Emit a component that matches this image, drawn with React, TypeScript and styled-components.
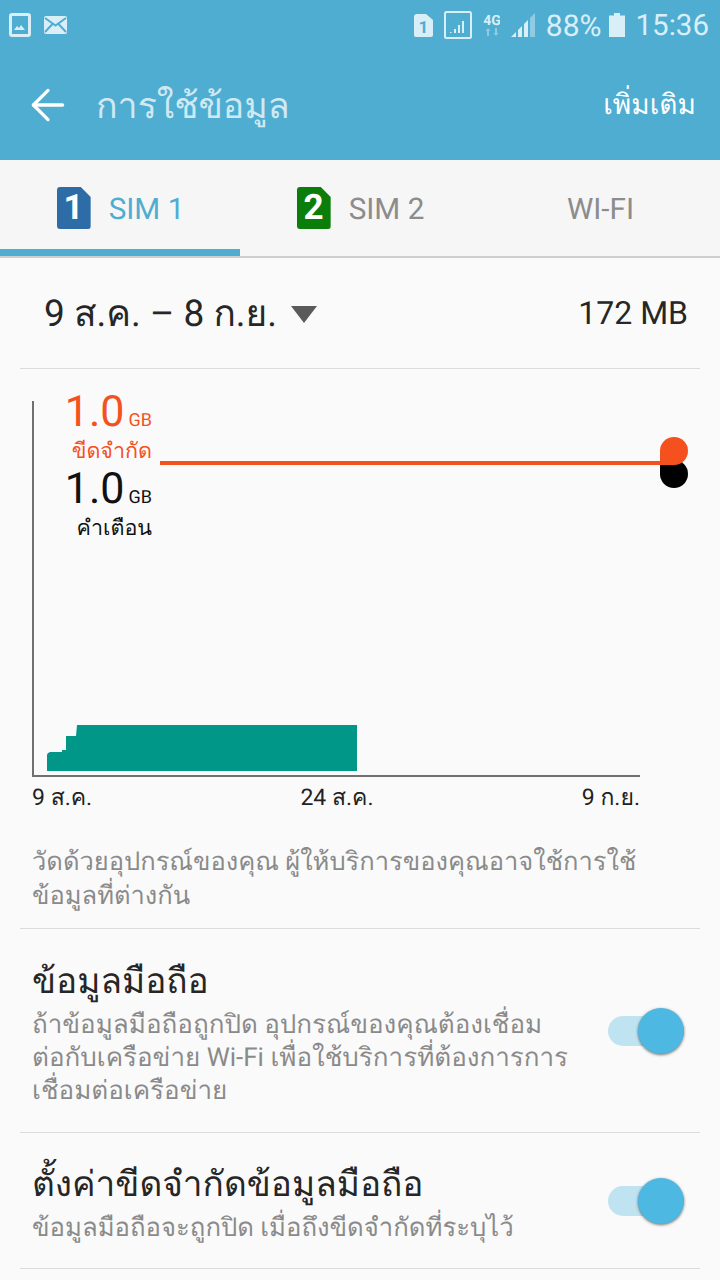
import styled, { createGlobalStyle } from "styled-components";
import { ArrowLeft } from "lucide-react";

const GlobalStyle = createGlobalStyle`
  html, body {
    margin: 0;
    padding: 0;
    background: #fafafa;
  }
  body {
    font-family: Roboto, "Noto Sans", "Liberation Sans", sans-serif;
    text-rendering: geometricPrecision;
  }
`;

const Page = styled.div`
  width: 720px;
  height: 1280px;
  overflow: hidden;
  background: #fafafa;
`;

const Header = styled.header`
  height: 160px;
  background: #4fadd2;
  color: #fff;
`;

const StatusBar = styled.div`
  height: 50px;
  display: flex;
  align-items: center;
  justify-content: space-between;
  padding: 0 11px 0 9px;
  color: #d9eff7;
`;

const StatusGroup = styled.div`
  display: flex;
  align-items: center;
  gap: 13px;
`;

const SignalGroup = styled(StatusGroup)`
  gap: 11px;
`;

const StatusRight = styled.div`
  display: flex;
  align-items: center;
  font-size: 30px;
`;

const Percent = styled.span`
  margin-left: 11px;
  padding-top: 2px;
`;

const Battery = styled.svg`
  margin-left: 7px;
`;

const Clock = styled.span`
  margin-left: 11px;
  padding-top: 2px;
  font-size: 29.5px;
`;

const Toolbar = styled.div`
  height: 110px;
  display: flex;
  align-items: center;
  padding: 0 24px 0 23px;
  box-sizing: border-box;
`;

const Title = styled.h1`
  flex: 1;
  margin: 0 0 0 23px;
  font-size: 35.7px;
  font-weight: 400;
  color: #cfe9f3;
`;

const MoreButton = styled.span`
  font-size: 28px;
  color: #fff;
`;

const Tabs = styled.nav`
  height: 98px;
  display: grid;
  grid-template-columns: repeat(3, 240px);
  box-sizing: border-box;
  background: #f6f6f6;
  border-bottom: 2px solid #cfcfcf;
`;

const Tab = styled.div<{ $active?: boolean }>`
  display: flex;
  align-items: center;
  justify-content: center;
  gap: 18px;
  height: 96px;
  box-sizing: border-box;
  padding: 7px 0 0 1px;
  font-size: 29.7px;
  color: ${(p) => (p.$active ? "#4fadd2" : "#8c8c8c")};
  border-bottom: 7px solid ${(p) => (p.$active ? "#4fadd2" : "transparent")};
`;

const TabLabel = styled.span`
  padding-top: 2px;
`;

const SimBadge = styled.span<{ $color: string }>`
  width: 34px;
  height: 42px;
  display: flex;
  align-items: center;
  justify-content: center;
  border-radius: 3px;
  clip-path: polygon(0 0, 71% 0, 100% 24%, 100% 100%, 0 100%);
  background: ${(p) => p.$color};
  color: #fff;
  font-size: 35px;
  font-weight: 700;
  line-height: 42px;
`;

const DateRow = styled.div`
  height: 110px;
  margin: 0 20px;
  padding: 0 12px 0 25px;
  display: flex;
  align-items: center;
  justify-content: space-between;
  border-bottom: 1px solid #dcdcdc;
`;

const DateRange = styled.div`
  display: flex;
  align-items: center;
  gap: 14px;
  font-size: 37px;
  color: #262626;
  margin-left: -1px;
`;

const Caret = styled.span`
  width: 0;
  height: 0;
  border-left: 13px solid transparent;
  border-right: 13px solid transparent;
  border-top: 17px solid #5a5a5a;
  margin-top: 3px;
`;

const Total = styled.span`
  font-size: 32px;
  color: #262626;
`;

const Chart = styled.section`
  position: relative;
  height: 415px;
`;

const ChartDrawing = styled.svg`
  display: block;
`;

const LimitLabel = styled.div<{ $top: number; $color: string }>`
  position: absolute;
  top: ${(p) => p.$top}px;
  right: 568px;
  text-align: right;
  color: ${(p) => p.$color};
  white-space: nowrap;
`;

const LimitValue = styled.div`
  font-size: 43px;
  line-height: 43px;
`;

const LimitUnit = styled.span`
  font-size: 18px;
  margin-left: 4px;
`;

const LimitName = styled.div`
  font-size: 21.5px;
  line-height: 20px;
`;

const Axis = styled.div`
  width: 608px;
  margin: -4px 0 0 32px;
  display: flex;
  justify-content: space-between;
  font-size: 23px;
  color: #222;
`;

const Note = styled.p`
  margin: 0 20px;
  padding: 29px 12px 15px;
  font-size: 25.5px;
  line-height: 34px;
  color: #8a8a8a;
  border-bottom: 1px solid #dcdcdc;
`;

const SettingRow = styled.div<{ $short?: boolean }>`
  margin: 0 20px;
  padding: ${(p) => (p.$short ? "25px 12px 23px" : "26px 12px 24px")};
  display: flex;
  align-items: center;
  justify-content: space-between;
  border-bottom: 1px solid #dcdcdc;
`;

const SettingText = styled.div`
  padding-top: 4px;
  white-space: nowrap;
`;

const SettingTitle = styled.div`
  font-size: 35.2px;
  line-height: 44px;
  color: #262626;
  margin-bottom: 6px;
`;

const SettingDescription = styled.div<{ $wide?: boolean }>`
  font-size: ${(p) => (p.$wide ? "26px" : "25.7px")};
  line-height: 33px;
  color: #8a8a8a;
`;

const Toggle = styled.div`
  position: relative;
  width: 76px;
  height: 30px;
  margin: 0 4px 2px 0;
  border-radius: 15px;
  background: #bfe3f0;
`;

const ToggleKnob = styled.span`
  position: absolute;
  right: 0;
  top: -8px;
  width: 46px;
  height: 46px;
  border-radius: 50%;
  background: #4db8e2;
  box-shadow: 0 1px 3px rgba(0, 0, 0, 0.55);
`;

function StatusIcons() {
  return (
    <StatusGroup>
      <svg width="22" height="24" viewBox="0 0 22 24" fill="none">
        <rect x="1.5" y="1.5" width="19" height="21" rx="1.5" stroke="#d9eff7" strokeWidth="3" />
        <path d="M5 17l3-4 2 2 2-3 4 5z" fill="#d9eff7" />
      </svg>
      <svg width="23" height="18" viewBox="0 0 23 18">
        <rect width="23" height="18" rx="2" fill="#d9eff7" />
        <path d="M1 2l10.500 7.500L22 2M1 16l7.500-8M22 16l-7.500-8" stroke="#4fadd2" strokeWidth="2" fill="none" />
      </svg>
    </StatusGroup>
  );
}

function Signals() {
  return (
    <SignalGroup>
      <svg width="19" height="23" viewBox="0 0 19 23">
        <path d="M3 0H12L19 6V21a2 2 0 0 1-2 2H2a2 2 0 0 1-2-2V3a3 3 0 0 1 3-3z" fill="#d9eff7" />
        <text x="9.500" y="19" textAnchor="middle" fontSize="17" fontWeight="700" fontFamily="Roboto, sans-serif" fill="#4fadd2">
          1
        </text>
      </svg>
      <svg width="28" height="28" viewBox="0 0 28 28" fill="none">
        <rect x="1" y="1" width="26" height="26" rx="1.500" stroke="#d9eff7" strokeWidth="2" />
        <path d="M6 21h1.500v1H6zM10 18h2v4h-2zM14 14h2v8h-2zM18 10h2v12h-2z" fill="#d9eff7" />
      </svg>
      <svg width="17" height="24" viewBox="0 0 17 24">
        <text x="9" y="12" textAnchor="middle" fontSize="14" fontWeight="700" fontFamily="Roboto, sans-serif" fill="#d9eff7">
          4G
        </text>
        <path d="M5 15l2.500 3H6v5H4v-5H2.500zM13 23l-2.500-3H12v-5h2v5h1.500z" fill="#8fcbe3" />
      </svg>
      <svg width="24" height="24" viewBox="0 0 24 24">
        <path d="M0 24L5 19V24zM7 17L11 13V24H7zM13 11L17 7V24H13z" fill="#d9eff7" />
        <path d="M19 5L24 0V24H19z" fill="#8fcbe3" />
      </svg>
    </SignalGroup>
  );
}

function UsageChart() {
  return (
    <ChartDrawing width="720" height="415" viewBox="0 0 720 415">
      <rect x="32" y="32" width="2" height="376" fill="#707070" />
      <rect x="32" y="406" width="608" height="2" fill="#707070" />
      <path d="M47 402V386Q47 384 50 383H62V381H66V367H76L77 356H357V402Z" fill="#009688" />
      <circle cx="674" cy="105" r="14" fill="#000" />
      <rect x="660" y="91" width="14" height="14" fill="#000" />
      <circle cx="674" cy="82" r="14" fill="#f4511e" />
      <rect x="660" y="82" width="14" height="14" fill="#f4511e" />
      <rect x="160" y="92" width="514" height="4" fill="#f4511e" />
    </ChartDrawing>
  );
}

export default function App() {
  return (
    <Page>
      <GlobalStyle />
      <Header>
        <StatusBar>
          <StatusIcons />
          <StatusRight>
            <Signals />
            <Percent>88%</Percent>
            <Battery width="16" height="24" viewBox="0 0 16 24">
              <path d="M5 0h6v2.500h5V24H0V2.500h5z" fill="#d9eff7" />
            </Battery>
            <Clock>15:36</Clock>
          </StatusRight>
        </StatusBar>
        <Toolbar>
          <ArrowLeft size={50} strokeWidth={1.6} color="#fff" />
          <Title>การใช้ข้อมูล</Title>
          <MoreButton>เพิ่มเติม</MoreButton>
        </Toolbar>
      </Header>
      <Tabs>
        <Tab $active>
          <SimBadge $color="#2e6ca8">1</SimBadge>
          <TabLabel>SIM 1</TabLabel>
        </Tab>
        <Tab>
          <SimBadge $color="#0a7d0a">2</SimBadge>
          <TabLabel>SIM 2</TabLabel>
        </Tab>
        <Tab>
          <TabLabel>WI-FI</TabLabel>
        </Tab>
      </Tabs>
      <DateRow>
        <DateRange>
          9 ส.ค. – 8 ก.ย.
          <Caret />
        </DateRange>
        <Total>172 MB</Total>
      </DateRow>
      <Chart>
        <UsageChart />
        <LimitLabel $top={22} $color="#f4511e">
          <LimitValue>
            1.0<LimitUnit>GB</LimitUnit>
          </LimitValue>
          <LimitName>ขีดจำกัด</LimitName>
        </LimitLabel>
        <LimitLabel $top={99} $color="#111">
          <LimitValue>
            1.0<LimitUnit>GB</LimitUnit>
          </LimitValue>
          <LimitName>คำเตือน</LimitName>
        </LimitLabel>
      </Chart>
      <Axis>
        <span>9 ส.ค.</span>
        <span>24 ส.ค.</span>
        <span>9 ก.ย.</span>
      </Axis>
      <Note>
        วัดด้วยอุปกรณ์ของคุณ ผู้ให้บริการของคุณอาจใช้การใช้
        <br />
        ข้อมูลที่ต่างกัน
      </Note>
      <SettingRow>
        <SettingText>
          <SettingTitle>ข้อมูลมือถือ</SettingTitle>
          <SettingDescription $wide>
            ถ้าข้อมูลมือถือถูกปิด อุปกรณ์ของคุณต้องเชื่อม
            <br />
            ต่อกับเครือข่าย Wi-Fi เพื่อใช้บริการที่ต้องการการ
            <br />
            เชื่อมต่อเครือข่าย
          </SettingDescription>
        </SettingText>
        <Toggle>
          <ToggleKnob />
        </Toggle>
      </SettingRow>
      <SettingRow $short>
        <SettingText>
          <SettingTitle>ตั้งค่าขีดจำกัดข้อมูลมือถือ</SettingTitle>
          <SettingDescription>ข้อมูลมือถือจะถูกปิด เมื่อถึงขีดจำกัดที่ระบุไว้</SettingDescription>
        </SettingText>
        <Toggle>
          <ToggleKnob />
        </Toggle>
      </SettingRow>
    </Page>
  );
}
